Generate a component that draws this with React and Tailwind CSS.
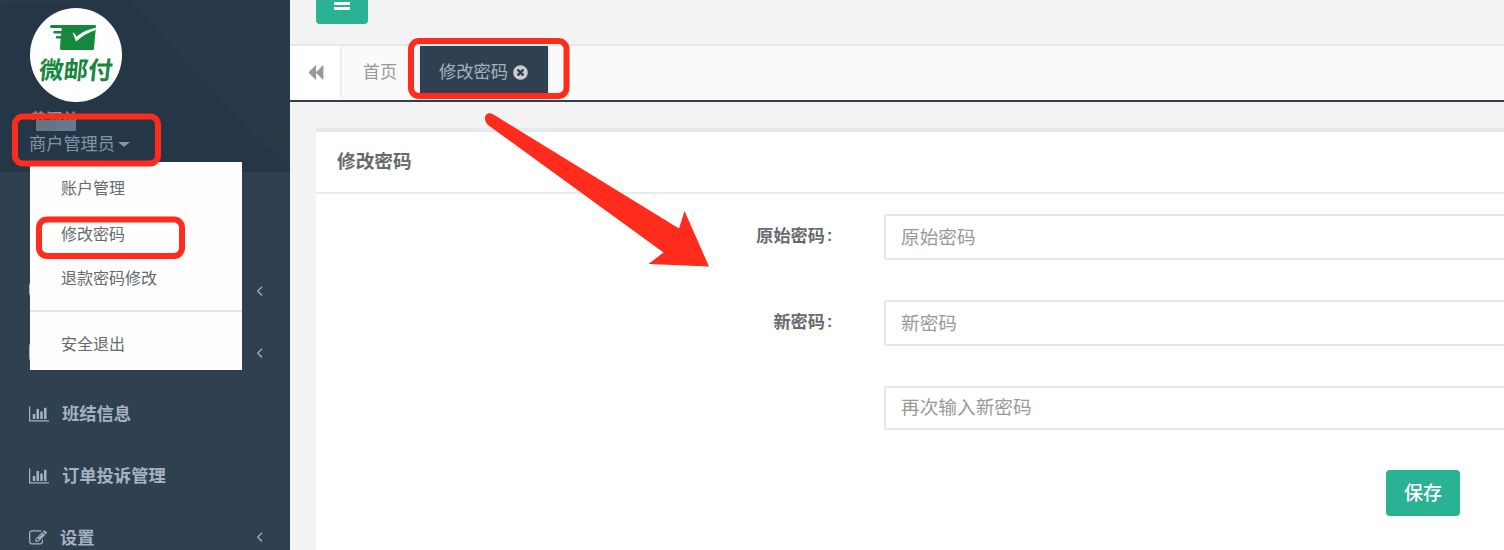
import React from "react";

function Icon({ d, box = "0 0 1792 1792", className }) {
  return (
    <svg viewBox={box} className={className} fill="currentColor" aria-hidden="true">
      <path d={d} />
    </svg>
  );
}

const CHART =
  "M640 896v512h-256v-512h256zm384-512v1024h-256v-1024h256zm1024 1152v128h-2048v-1536h128v1408h1920zm-640-896v768h-256v-768h256zm384-384v1152h-256v-1152h256z";
const EDIT =
  "M888 1184l116-116-152-152-116 116v56h96v96h56zm440-720q-16-16-33 1l-350 350q-17 17-1 33t33-1l350-350q17-17 1-33zm80 594v190q0 119-84.5 203.5t-203.5 84.5h-832q-119 0-203.5-84.5t-84.5-203.5v-832q0-119 84.5-203.5t203.5-84.5h832q63 0 117 25 15 7 18 23 3 17-9 29l-49 49q-14 14-32 8-23-6-45-6h-832q-66 0-113 47t-47 113v832q0 66 47 113t113 47h832q66 0 113-47t47-113v-126q0-13 9-22l64-64q15-15 35-7t20 29zm-96-738l288 288-672 672h-288v-288zm444 132l-92 92-288-288 92-92q28-28 68-28t68 28l152 152q28 28 28 68t-28 68z";
const BACKWARD =
  "M1683 141q19-19 32-13t13 32v1472q0 26-13 32t-32-13l-710-710q-9-9-13-19v710q0 26-13 32t-32-13l-710-710q-19-19-19-45t19-45l710-710q19-19 32-13t13 32v710q4-10 13-19z";
const CLOSE =
  "M1277 1122q0-26-19-45l-181-181 181-181q19-19 19-45 0-27-19-46l-90-90q-19-19-46-19-26 0-45 19l-181 181-181-181q-19-19-45-19-27 0-46 19l-90 90q-19 19-19 46 0 26 19 45l181 181-181 181q-19 19-19 45 0 27 19 46l90 90q19 19 46 19 26 0 45-19l181-181 181 181q19 19 45 19 27 0 46-19l90-90q19-19 19-46zm387-226q0 209-103 385.5t-279.5 279.5-385.5 103-385.5-103-279.5-279.5-103-385.5 103-385.5 279.5-279.5 385.5-103 385.5 103 279.5 279.5 103 385.5z";
const ANGLE =
  "M1203 544q0 13-10 23l-393 393 393 393q10 10 10 23t-10 23l-50 50q-10 10-23 10t-23-10l-466-466q-10-10-10-23t10-23l466-466q10-10 23-10t23 10l50 50q10 10 10 23z";

function Logo() {
  return (
    <div className="flex h-[94px] w-[92px] flex-col items-center rounded-[50%] bg-white pt-[17px] text-[#15883e]">
      <svg viewBox="0 0 46 25" className="mr-[6px] h-[25px] w-[46px] shrink-0" aria-hidden="true">
        <path
          fill="currentColor"
          d="M1.500 0H45a1 1 0 0 1 1 1l-2 22.500a1.500 1.500 0 0 1-1.500 1.500H11.500a1.500 1.500 0 0 1-1.500-1.600L10.600 13.500H7a1 1 0 0 1 0-2.500h4L11.200 8.500H4.500a1.200 1.200 0 0 1 0-2.600h7L11.700 3H1.500a1.500 1.500 0 0 1 0-3z"
        />
        <path fill="#fff" d="M22.500 7.500c2 0 3 2.500 4 4.200C31 8 38 4.200 45.800 2.800L45.600 5C38 7.500 31.500 11.500 26 16.500c-1-3-2.200-6-3.500-9z" />
      </svg>
      <span className="mr-px mt-[4px] -skew-x-6 whitespace-nowrap text-[24.500px] font-bold leading-[34px]">微邮付</span>
    </div>
  );
}

function NavItem({ icon, box, iconClass, label, gap, arrow }) {
  return (
    <div className="flex h-[62px] items-center pl-[29px] pr-[22px] text-[17.300px] font-bold text-[#a7b1c2]">
      <Icon d={icon} box={box} className={iconClass} />
      <span className={gap}>{label}</span>
      {arrow && <Icon d={ANGLE} className={arrow} />}
    </div>
  );
}

function Sidebar() {
  return (
    <aside className="relative flex h-[550px] w-[290px] shrink-0 flex-col overflow-hidden bg-[#2f4050]">
      <header className="relative h-[172px] shrink-0 bg-[#253646] pl-[30px] pt-[8px]">
        <svg viewBox="0 0 290 172" className="absolute inset-0 h-[172px] w-[290px]" aria-hidden="true">
          <path d="M130 0H290V115L258 140Z" fill="#283a49" />
          <path d="M258 140L278 45L290 40V115Z" fill="#273948" />
          <path d="M258 140L290 115V165Z" fill="#283948" />
          <path d="M0 0H130L0 5Z" fill="#283a49" />
        </svg>
        <div className="relative flex flex-col">
          <Logo />
          <div className="mt-[9px] h-[18px] whitespace-nowrap text-[16px] font-medium leading-[18px] text-[#8e9aa6]">
            黄河单
          </div>
          <div className="-mt-[9px] flex h-[11px] w-[56px] bg-[#253646] pl-[6px]">
            <span className="w-[20px] bg-[#687481]" />
            <span className="w-[20px] bg-[#657a91]" />
          </div>
          <div className="mt-[2px] flex h-[24px] items-center text-[17.200px] text-[#8095a8]">
            <span className="-ml-px">商户管理员</span>
            <span className="mb-px ml-[3px] border-x-[6px] border-t-[5px] border-x-transparent border-t-[#8095a8]" />
          </div>
        </div>
      </header>
      <nav className="flex flex-col pt-[87px]">
        <NavItem icon={EDIT} iconClass="h-[18px] w-[18px]" label="" gap="" arrow="ml-auto h-[17px] w-[17px]" />
        <NavItem icon={CHART} box="0 0 2048 1792" iconClass="h-[18px] w-[20px]" label="" gap="" arrow="ml-auto h-[17px] w-[17px]" />
        <NavItem icon={CHART} box="0 0 2048 1792" iconClass="h-[18px] w-[20px]" label="班结信息" gap="ml-[13px] mt-[2px]" />
        <NavItem icon={CHART} box="0 0 2048 1792" iconClass="h-[18px] w-[20px]" label="订单投诉管理" gap="ml-[13px] mt-[2px]" />
        <NavItem icon={EDIT} iconClass="h-[18px] w-[18px]" label="设置" gap="ml-[13px] mt-[2px]" arrow="mb-[4px] ml-auto h-[17px] w-[17px]" />
      </nav>
      <div className="absolute left-[30px] top-[162px] flex h-[208px] w-[212px] flex-col bg-[#fefefe] text-[16px] leading-[24px] text-[#676a6c]">
        <div className="mt-[15px] pl-[31px]">账户管理</div>
        <div className="mt-[22px] pl-[31px]">修改密码</div>
        <div className="mt-[20px] pl-[31px]">退款密码修改</div>
        <div className="mt-[19px] h-[2px] bg-[#e5e5e5]" />
        <div className="mt-[21px] pl-[31px]">安全退出</div>
      </div>
    </aside>
  );
}

function Field({ label, placeholder, size }) {
  return (
    <div className="flex items-start">
      <label className="w-[518px] shrink-0 pt-[10px] text-right text-[17.200px] font-bold leading-[24px] text-[#676a6c]">
        {label}
        {label && <span className="relative -top-px inline-block w-[9px] text-center">:</span>}
      </label>
      <input
        type="text"
        placeholder={placeholder}
        className={`ml-[50px] ${size} w-[700px] shrink-0 rounded-[2px] border-2 border-[#e5e6e7] bg-white px-[15px] text-[18.670px] text-[#676a6c] outline-none placeholder:text-[#999999]`}
      />
    </div>
  );
}

export default function App() {
  return (
    <div className="relative flex h-[550px] w-[1504px] overflow-hidden bg-[#f3f3f4] font-['Liberation_Sans','Noto_Sans_CJK_SC',sans-serif]">
      <Sidebar />
      <main className="flex min-w-0 flex-1 flex-col overflow-hidden bg-[#f3f3f3]">
        <div className="h-[44px] shrink-0 pl-[26px]">
          <button className="flex h-[24px] w-[52px] flex-col items-center gap-[2px] rounded-b-[4px] bg-[#29b294] pt-[2px]">
            <span className="h-[3px] w-[16px] bg-white" />
            <span className="h-[3px] w-[16px] bg-white" />
          </button>
        </div>
        <div className="flex h-[58px] shrink-0 border-b-2 border-t-2 border-b-[#2f4050] border-t-[#e7eaec] bg-[#fafafa]">
          <div className="flex h-[52px] w-[52px] items-center justify-center border-r-2 border-[#eeeeee] bg-white text-[#999999]">
            <Icon d={BACKWARD} className="h-[17px] w-[17px]" />
          </div>
          <div className="flex h-[52px] w-[78px] items-center justify-center border-r-2 border-[#eeeeee] pt-[2px] text-[17.200px] text-[#999999]">
            首页
          </div>
          <div className="flex h-[48px] w-[128px] items-center bg-[#2f4050] pl-[19px] pt-[4px] text-[17.300px] text-[#a7b1c2]">
            <span className="mt-[2px]">修改密码</span>
            <Icon d={CLOSE} className="ml-[4px] h-[17px] w-[17px] text-[#cccccc]" />
          </div>
          <div className="h-[52px] w-[2px] bg-[#eeeeee]" />
        </div>
        <section className="ml-[26px] mt-[26px] flex flex-1 flex-col border-t-4 border-[#e7eaec] bg-white">
          <h5 className="flex h-[62px] shrink-0 items-center border-b-2 border-[#e7eaec] pl-[21px] text-[18.670px] font-bold text-[#676a6c]">
            修改密码
          </h5>
          <form className="flex flex-col gap-[40px] pt-[20px]">
            <Field label="原始密码" placeholder="原始密码" size="h-[46px] pt-[2px]" />
            <Field label="新密码" placeholder="新密码" size="h-[46px] pt-[2px]" />
            <Field label="" placeholder="再次输入新密码" size="h-[44px]" />
            <button type="button" className="ml-[1070px] flex h-[46px] w-[74px] items-center justify-center rounded-[4px] bg-[#29b294] pt-[2px] text-[19px] font-medium text-white">
              保存
            </button>
          </form>
        </section>
      </main>
      <svg viewBox="0 0 1504 550" className="pointer-events-none absolute inset-0 h-[550px] w-[1504px]" aria-hidden="true">
        <g fill="none" stroke="#ff2b1d" strokeWidth="6">
          <rect x="15" y="116.500" width="143" height="47" rx="8" />
          <rect x="39" y="219.500" width="143" height="36.500" rx="8" />
          <rect x="411" y="41" width="155.500" height="55" rx="8" />
        </g>
        <path
          fill="#ff2b1d"
          d="M493 114.300L679 228.500L684.500 211L709 266.500L648.500 264L663.500 252.500L488 125C482 119 485.500 110.500 493 114.300Z"
        />
      </svg>
    </div>
  );
}
